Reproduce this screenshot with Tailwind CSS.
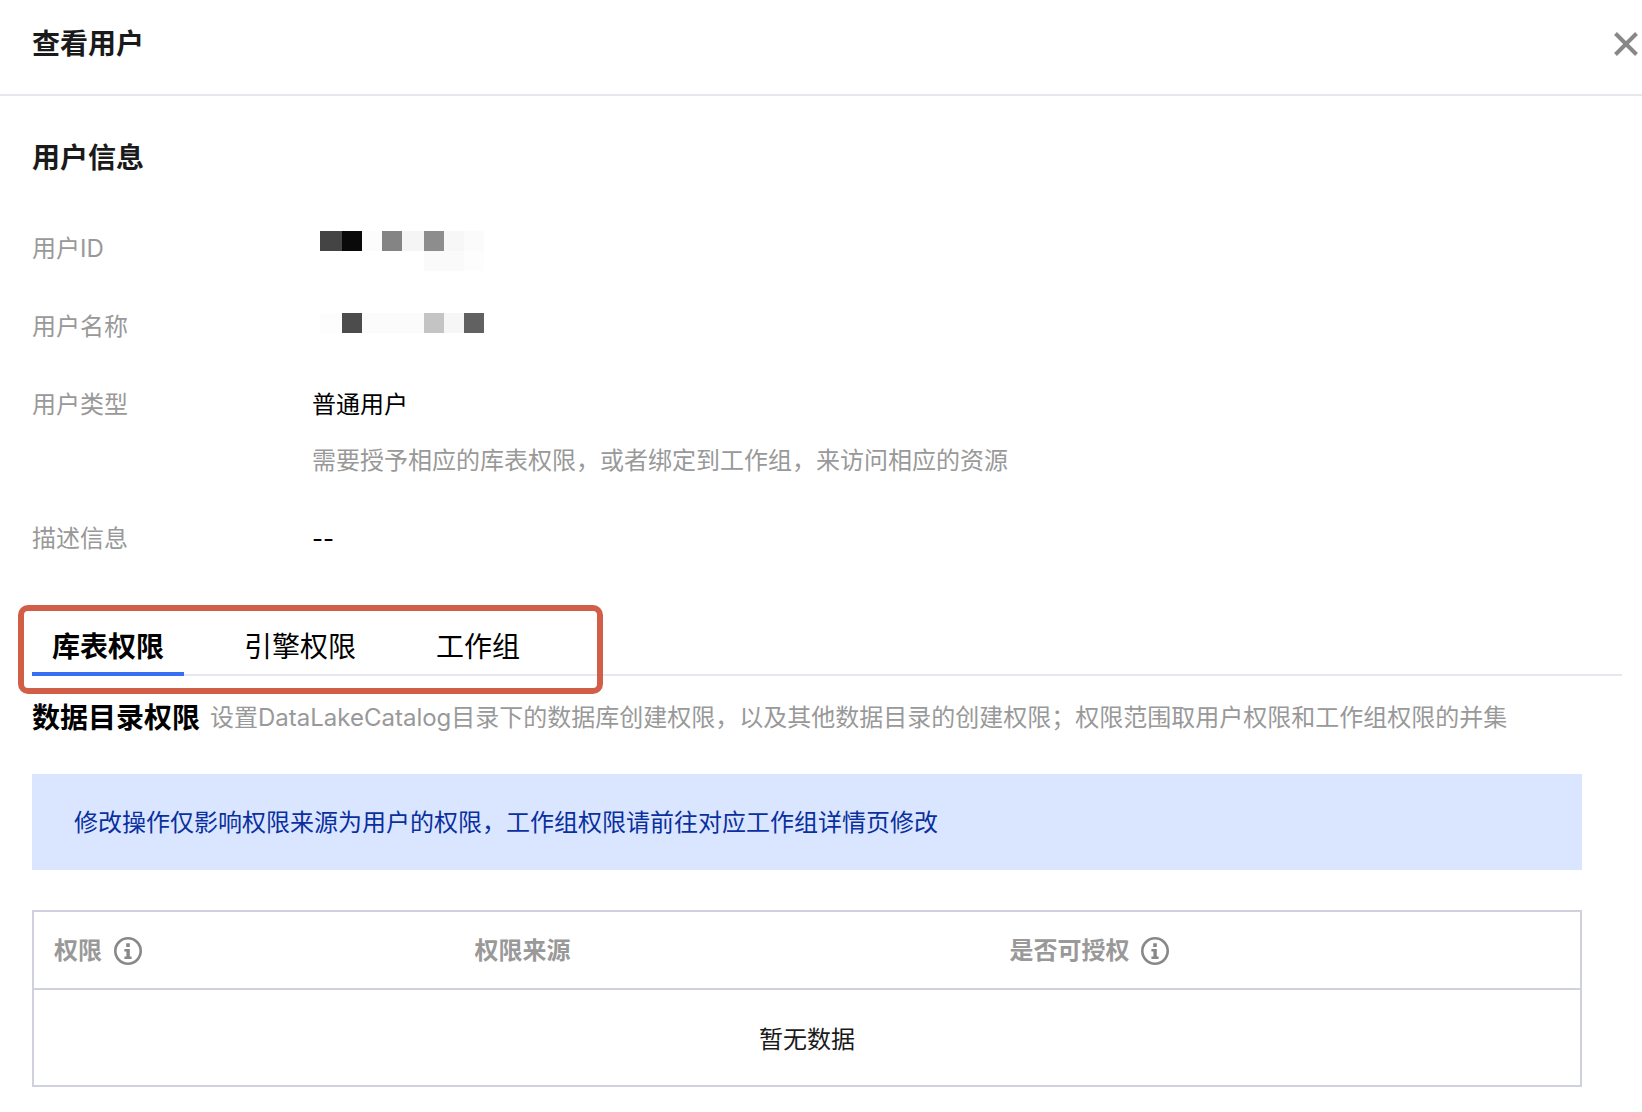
<!DOCTYPE html>
<html lang="zh-CN">
  <head>
    <meta charset="UTF-8" />
    <meta name="viewport" content="width=device-width, initial-scale=1.0" />
    <title>查看用户</title>
    <script src="https://cdn.jsdelivr.net/npm/@tailwindcss/browser@4"></script>
  </head>
  <body class="bg-white font-['Inter','Noto_Sans_CJK_SC',sans-serif] text-2xl/9 text-black">
    <header class="flex items-center justify-between border-b-2 border-[#e7e8ee] pt-6 pr-1 pb-[30px] pl-8">
      <h1 class="text-[28px]/10 font-bold text-[#1a1a1a]">查看用户</h1>
      <button type="button" aria-label="关闭" class="text-[#888]">
        <svg class="size-6" viewBox="0 0 24 24" fill="none" stroke="currentColor" stroke-width="4">
          <path d="M1.5 1.5 22.5 22.5M22.5 1.5 1.5 22.5" />
        </svg>
      </button>
    </header>

    <main class="pr-5 pl-8">
      <h2 class="mt-[42px] text-[28px]/10 font-bold text-[#1a1a1a]">用户信息</h2>

      <dl class="mt-[53px] grid grid-cols-[280px_1fr] gap-y-[42px]">
        <dt class="text-[#999]">用户ID</dt>
        <dd class="pl-2">
          <svg class="h-10 w-[164px] -mb-1" viewBox="0 0 164 40" shape-rendering="crispEdges" aria-hidden="true">
            <rect width="22" height="20" fill="#444" />
            <rect x="22" width="20" height="20" fill="#090909" />
            <rect x="42" width="20" height="20" fill="#fcfcfc" />
            <rect x="62" width="20" height="20" fill="#848484" />
            <rect x="82" width="22" height="20" fill="#f5f5f5" />
            <rect x="104" width="20" height="20" fill="#8d8d8d" />
            <rect x="124" width="20" height="20" fill="#f7f7f7" />
            <rect x="144" width="20" height="20" fill="#fbfbfb" />
            <rect x="104" y="20" width="40" height="20" fill="#fafafa" />
            <rect x="144" y="20" width="20" height="20" fill="#fdfdfd" />
          </svg>
        </dd>

        <dt class="text-[#999]">用户名称</dt>
        <dd class="pt-1 pl-2">
          <svg class="h-5 w-[164px]" viewBox="0 0 164 20" shape-rendering="crispEdges" aria-hidden="true">
            <rect width="22" height="20" fill="#fdfdfd" />
            <rect x="22" width="20" height="20" fill="#4c4c4c" />
            <rect x="42" width="62" height="20" fill="#fbfbfb" />
            <rect x="104" width="20" height="20" fill="#c4c4c4" />
            <rect x="124" width="20" height="20" fill="#f6f6f6" />
            <rect x="144" width="20" height="20" fill="#616161" />
          </svg>
        </dd>

        <dt class="text-[#999]">用户类型</dt>
        <dd>
          <p>普通用户</p>
          <p class="mt-5 text-[#999]">需要授予相应的库表权限，或者绑定到工作组，来访问相应的资源</p>
        </dd>

        <dt class="text-[#999]">描述信息</dt>
        <dd>--</dd>
      </dl>

      <div class="relative mt-[70px]">
        <div role="tablist" class="flex gap-10 border-b-2 border-[#e7e8ee] text-[28px]/10">
          <button type="button" role="tab" aria-selected="true" class="-mb-0.5 border-b-4 border-[#366ef4] px-5 pb-[5px] font-bold">库表权限</button>
          <button type="button" role="tab" aria-selected="false" class="-mb-0.5 border-b-4 border-transparent px-5 pb-[5px]">引擎权限</button>
          <button type="button" role="tab" aria-selected="false" class="-mb-0.5 border-b-4 border-transparent px-5 pb-[5px]">工作组</button>
        </div>
        <div class="pointer-events-none absolute -top-[22px] -bottom-[18px] -left-3.5 w-[585px] rounded-[10px] border-6 border-[#d15f48]"></div>
      </div>

      <section class="pr-10">
        <div class="mt-[22px] flex items-center gap-2.5">
          <h3 class="text-[28px]/10 font-bold">数据目录权限</h3>
          <p class="text-[#999]">设置DataLakeCatalog目录下的数据库创建权限，以及其他数据目录的创建权限；权限范围取用户权限和工作组权限的并集</p>
        </div>

        <div class="mt-9 bg-[#dae6ff] px-[42px] pt-[31px] pb-[29px] text-[#0a2f9e]">修改操作仅影响权限来源为用户的权限，工作组权限请前往对应工作组详情页修改</div>

        <table class="mt-10 w-full table-fixed border-separate border-spacing-0 border-2 border-[#cfd2de]">
          <thead class="text-left text-[#999]">
            <tr>
              <th class="w-[27.2%] border-b-2 border-[#cfd2de] px-5 pt-[21px] pb-[19px] font-bold">
                <span class="flex items-center gap-3">
                  权限
                  <svg class="size-7 text-[#888]" viewBox="0 0 28 28" fill="none" aria-hidden="true">
                    <circle cx="14" cy="14" r="12.7" stroke="currentColor" stroke-width="2.6" />
                    <path d="M12.2 6.3h3.6v3.6h-3.6zM10.4 12h5.4v7.6h1.8V22h-7.2v-2.4h2v-5.2h-2z" fill="currentColor" />
                  </svg>
                </span>
              </th>
              <th class="w-[34.6%] border-b-2 border-[#cfd2de] px-5 pt-[21px] pb-[19px] font-bold">权限来源</th>
              <th class="border-b-2 border-[#cfd2de] px-5 pt-[21px] pb-[19px] font-bold">
                <span class="flex items-center gap-3">
                  是否可授权
                  <svg class="size-7 text-[#888]" viewBox="0 0 28 28" fill="none" aria-hidden="true">
                    <circle cx="14" cy="14" r="12.7" stroke="currentColor" stroke-width="2.6" />
                    <path d="M12.2 6.3h3.6v3.6h-3.6zM10.4 12h5.4v7.6h1.8V22h-7.2v-2.4h2v-5.2h-2z" fill="currentColor" />
                  </svg>
                </span>
              </th>
            </tr>
          </thead>
          <tbody>
            <tr>
              <td colspan="3" class="pt-8 pb-[27px] text-center text-[#1a1a1a]">暂无数据</td>
            </tr>
          </tbody>
        </table>
      </section>
    </main>
  </body>
</html>
